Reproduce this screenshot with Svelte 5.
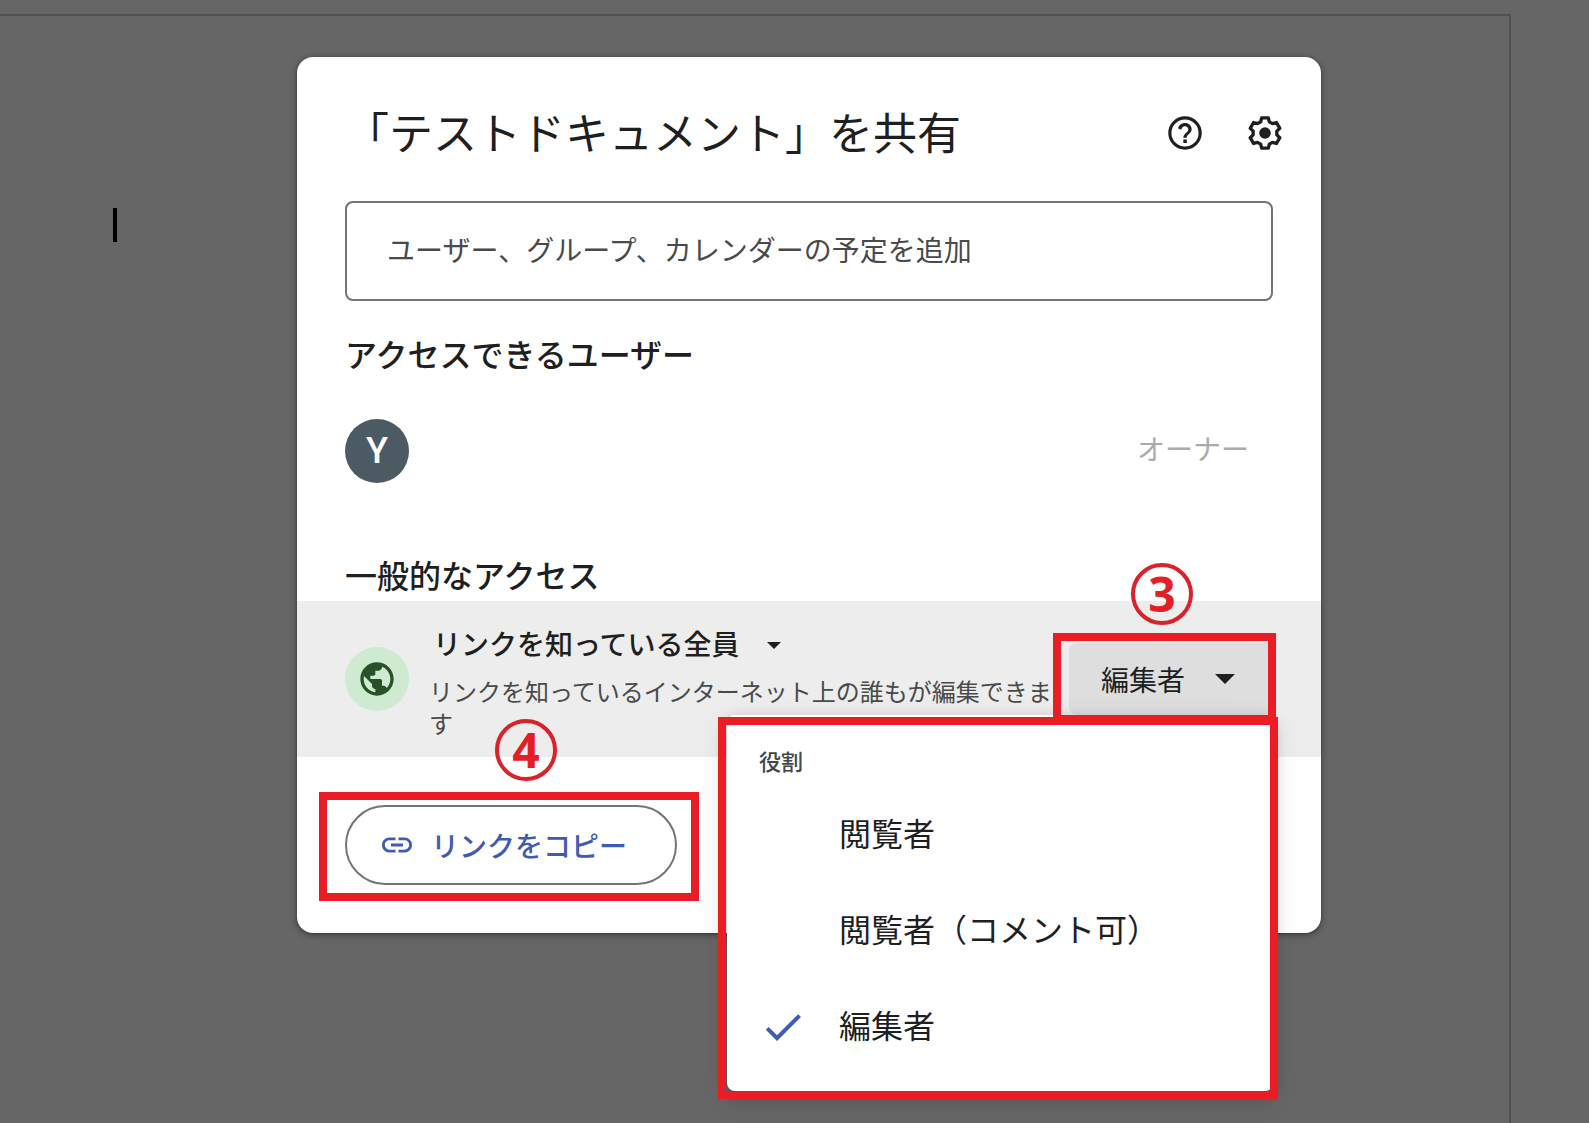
<script>
  const roles = ['閲覧者', '閲覧者（コメント可）', '編集者'];
  const scopes = ['リンクを知っている全員', '制限付き'];

  // One tooth of the settings gear, turned six times round the centre.
  const tooth = [[-2.6, -6.7], [-2, -9.1], [2, -9.1], [2.6, -6.7]];
  const gear = [0, 1, 2, 3, 4, 5]
    .flatMap((turn) => {
      const a = (turn * Math.PI) / 3;
      return tooth.map(([x, y]) => {
        const px = 12 + x * Math.cos(a) - y * Math.sin(a);
        const py = 12 + x * Math.sin(a) + y * Math.cos(a);
        return `${px.toFixed(2)},${py.toFixed(2)}`;
      });
    })
    .join(' ');

  let role = $state('編集者');
  let scope = $state(scopes[0]);
  let invitee = $state('');
  let menuOpen = $state(true);

  function choose(next) {
    role = next;
    menuOpen = false;
  }
</script>

<div class="page">
  <div class="document">
    <span class="text-cursor"></span>
  </div>

  <div class="overlay">
    <div class="dialog" role="dialog" aria-labelledby="share-title">
      <header>
        <h1 id="share-title">「テストドキュメント」を共有</h1>
        <div class="actions">
          <button class="icon-button" type="button" aria-label="ヘルプ">
            <svg viewBox="0 0 24 24" width="40" height="40">
              <circle cx="12" cy="12" r="9.1" fill="none" stroke="currentColor" stroke-width="1.9" />
              <path d="M11 18h2.100v-2.100H11zM12 6c-2.100 0-3.800 1.400-4.100 3.300l1.900.8c.2-1.400 1-2.200 2.200-2.200s2 .8 2 2c0 1.900-3 2.200-3 5h2c0-2 3-2.600 3-5.100C16 7.600 14.200 6 12 6z" />
            </svg>
          </button>
          <button class="icon-button" type="button" aria-label="設定">
            <svg viewBox="0 0 24 24" width="40" height="40">
              <polygon points={gear} fill="none" stroke="currentColor" stroke-width="2" stroke-linejoin="round" />
              <circle cx="12" cy="12" r="3.5" />
            </svg>
          </button>
        </div>
      </header>

      <input
        class="invite"
        type="text"
        aria-label="ユーザー、グループ、カレンダーの予定を追加"
        placeholder="ユーザー、グループ、カレンダーの予定を追加"
        bind:value={invitee}
      />

      <h2>アクセスできるユーザー</h2>
      <div class="member">
        <span class="avatar">Y</span>
        <span class="owner">オーナー</span>
      </div>

      <h2 class="general">一般的なアクセス</h2>
      <section class="band">
        <span class="avatar globe">
          <svg viewBox="0 0 24 24" width="40" height="40">
            <path d="M12 2C6.48 2 2 6.48 2 12s4.480 10 10 10 10-4.480 10-10S17.520 2 12 2zm-1 17.930c-3.950-.49-7-3.850-7-7.930 0-.62.08-1.210.21-1.790L9 15v1c0 1.100.9 2 2 2v1.930zm6.900-2.540c-.26-.81-1-1.390-1.900-1.390h-1v-3c0-.55-.45-1-1-1H8v-2h2c.55 0 1-.45 1-1V7h2c1.100 0 2-.9 2-2v-.41c2.930 1.190 5 4.060 5 7.410 0 2.080-.8 3.970-2.100 5.390z" />
          </svg>
        </span>
        <div class="scope">
          <label class="scope-picker">
            <select aria-label="一般的なアクセス" bind:value={scope}>
              {#each scopes as item}
                <option value={item}>{item}</option>
              {/each}
            </select>
            <svg class="caret" viewBox="0 0 14 7" width="14" height="7"><path d="M0 0h14L7 7z" /></svg>
          </label>
          <p>リンクを知っているインターネット上の誰もが編集できます</p>
        </div>

        <div class="role">
          <button
            class="role-button"
            type="button"
            aria-haspopup="menu"
            aria-expanded={menuOpen}
            onclick={() => (menuOpen = !menuOpen)}
          >
            <span>{role}</span>
            <svg viewBox="0 0 20 10" width="20" height="10"><path d="M0 0h20L10 10z" /></svg>
          </button>

          {#if menuOpen}
            <div class="menu" role="menu" aria-label="役割">
              <div class="menu-label">役割</div>
              {#each roles as item}
                <button
                  class="menu-item"
                  type="button"
                  role="menuitemradio"
                  aria-checked={item === role}
                  onclick={() => choose(item)}
                >
                  <span class="mark">
                    {#if item === role}
                      <svg viewBox="0 0 24 24" width="48" height="48">
                        <path d="M9 16.170 4.830 12l-1.420 1.410L9 19 21 7l-1.410-1.410z" />
                      </svg>
                    {/if}
                  </span>
                  <span class="item-text">{item}</span>
                </button>
              {/each}
              <span class="frame menu-frame"></span>
            </div>
          {/if}
          <span class="frame role-frame"></span>
          <span class="step step-role">3</span>
        </div>
      </section>

      <footer>
        <div class="copy">
          <button class="copy-button" type="button">
            <svg viewBox="0 0 24 24" width="36" height="36">
              <path d="M3.900 12c0-1.710 1.390-3.100 3.100-3.100h4V7H7c-2.760 0-5 2.240-5 5s2.240 5 5 5h4v-1.900H7c-1.710 0-3.100-1.390-3.100-3.100zM8 13h8v-2H8v2zm9-6h-4v1.900h4c1.710 0 3.100 1.390 3.100 3.100s-1.390 3.100-3.100 3.100h-4V17h4c2.760 0 5-2.240 5-5s-2.240-5-5-5z" />
            </svg>
            <span>リンクをコピー</span>
          </button>
          <span class="frame copy-frame"></span>
          <span class="step step-copy">4</span>
        </div>
      </footer>
    </div>
  </div>
</div>

<style>
  :global(body) {
    background: #666;
  }

  .page {
    position: relative;
    display: flex;
    box-sizing: border-box;
    min-height: 100vh;
    padding: 14px 78px 0 0;
    overflow: hidden;
    background: #666;
    color: #1f1f1f;
    font-family: 'Noto Sans CJK JP', sans-serif;
  }

  .document {
    flex: 1;
    padding: 192px 0 0 113px;
    border: solid #525252;
    border-width: 2px 2px 0 0;
  }

  .text-cursor {
    display: block;
    width: 4px;
    height: 34px;
    background: #000;
  }

  .overlay {
    position: absolute;
    inset: 0;
    display: flex;
    align-items: flex-start;
    justify-content: center;
    padding: 57px 0 0 29px;
  }

  .dialog {
    width: 100%;
    max-width: 1024px;
    border-radius: 16px;
    background: #fff;
    box-shadow: 0 2px 6px 2px rgba(0, 0, 0, 0.2), 0 1px 3px rgba(0, 0, 0, 0.3);
  }

  button,
  input,
  select {
    margin: 0;
    font-family: inherit;
    color: inherit;
  }

  button {
    padding: 0;
    border: 0;
    background: none;
    cursor: pointer;
  }

  svg {
    display: block;
    flex: none;
    fill: currentColor;
  }

  header {
    display: flex;
    align-items: center;
    justify-content: space-between;
    padding: 42px 32px 34px 48px;
  }

  h1 {
    margin: 0;
    padding-bottom: 4px;
    font-size: 44px;
    font-weight: 400;
    line-height: 64px;
  }

  .actions {
    display: flex;
    gap: 32px;
  }

  .icon-button {
    display: grid;
    place-items: center;
    width: 48px;
    height: 48px;
  }

  .invite {
    display: block;
    box-sizing: border-box;
    width: calc(100% - 96px);
    height: 100px;
    margin: 0 48px;
    padding: 0 40px 4px;
    border: 2px solid #747474;
    border-radius: 8px;
    background: #fff;
    font-size: 28px;
  }

  .invite::placeholder {
    color: #4a4a4a;
    opacity: 1;
  }

  h2 {
    margin: 28px 48px 42px;
    font-size: 32px;
    font-weight: 500;
    line-height: 48px;
  }

  .general {
    margin: 67px 48px 0;
    padding-bottom: 3px;
  }

  .member {
    display: flex;
    align-items: center;
    justify-content: space-between;
    padding: 0 72px 0 48px;
  }

  .avatar {
    display: grid;
    flex: none;
    place-items: center;
    width: 64px;
    height: 64px;
    border-radius: 50%;
    background: #4c5b63;
    color: #fff;
    font-family: Roboto, sans-serif;
    font-size: 36px;
    font-weight: 500;
    line-height: 64px;
  }

  .globe {
    background: #ceead1;
    color: #295127;
  }

  .owner {
    padding-bottom: 6px;
    color: #ababab;
    font-size: 28px;
    line-height: 40px;
  }

  .band {
    display: flex;
    align-items: center;
    padding: 0 48px;
    background: #ededed;
  }

  .scope {
    flex: 1;
    padding: 24px 0 18px 20px;
  }

  .scope-picker {
    display: inline-grid;
    align-items: center;
    margin-bottom: 10px;
    padding-left: 4px;
    vertical-align: top;
  }

  .scope-picker > * {
    grid-area: 1 / 1;
  }

  select {
    height: 40px;
    padding: 0 39px 4px 0;
    border: 0;
    background: none;
    appearance: none;
    font-size: 28px;
    font-weight: 500;
    line-height: 36px;
  }

  .caret {
    justify-self: end;
    pointer-events: none;
  }

  .scope p {
    margin: 0;
    color: #4a4a4a;
    font-size: 24px;
    line-height: 32px;
  }

  .role {
    position: relative;
    flex: none;
  }

  .role-button {
    display: flex;
    align-items: center;
    justify-content: space-between;
    width: 204px;
    height: 72px;
    padding: 0 38px 0 32px;
    border-radius: 8px;
    background: #dedede;
    font-size: 28px;
  }

  .menu {
    position: absolute;
    top: 100%;
    right: 0;
    width: 546px;
    box-sizing: border-box;
    padding: 24px 0 16px;
    border-radius: 8px;
    background: #fff;
    box-shadow: 0 4px 12px 2px rgba(0, 0, 0, 0.12), 0 8px 28px rgba(0, 0, 0, 0.14);
  }

  .menu-label {
    padding: 0 32px 6px;
    color: #444746;
    font-size: 22px;
    font-weight: 500;
    line-height: 42px;
  }

  .menu-item {
    display: flex;
    align-items: center;
    gap: 32px;
    width: 100%;
    height: 96px;
    padding: 0 32px;
    font-size: 32px;
    text-align: left;
  }

  .item-text {
    padding-bottom: 6px;
  }

  .mark {
    width: 48px;
    height: 48px;
    color: #3f5cb5;
  }

  footer {
    display: flex;
    padding: 48px;
  }

  .copy {
    position: relative;
  }

  .copy-button {
    display: flex;
    align-items: center;
    gap: 16px;
    height: 80px;
    padding: 0 48px 0 32px;
    border: 2px solid #747474;
    border-radius: 40px;
    color: #3f5cb5;
    font-size: 28px;
    font-weight: 500;
  }

  /* Red tutorial outlines and step numbers lie over the dialog. */
  .frame {
    position: absolute;
    border: 8px solid #eb1c24;
    pointer-events: none;
  }

  .menu-frame {
    inset: 2px -5px -8px -9px;
  }

  .role-frame {
    inset: -10px -3px -8px -16px;
  }

  .copy-frame {
    inset: -13px -22px -16px -26px;
  }

  .step {
    position: absolute;
    display: grid;
    place-items: center;
    box-sizing: border-box;
    width: 62px;
    height: 62px;
    border: 4px solid #d9232b;
    border-radius: 50%;
    color: #e51e26;
    font-family: 'Open Sans', 'Noto Sans', sans-serif;
    font-size: 48px;
    font-weight: 700;
    line-height: 54px;
  }

  .step-role {
    top: -80px;
    left: 62px;
  }

  .step-copy {
    top: -86px;
    left: 150px;
  }
</style>
